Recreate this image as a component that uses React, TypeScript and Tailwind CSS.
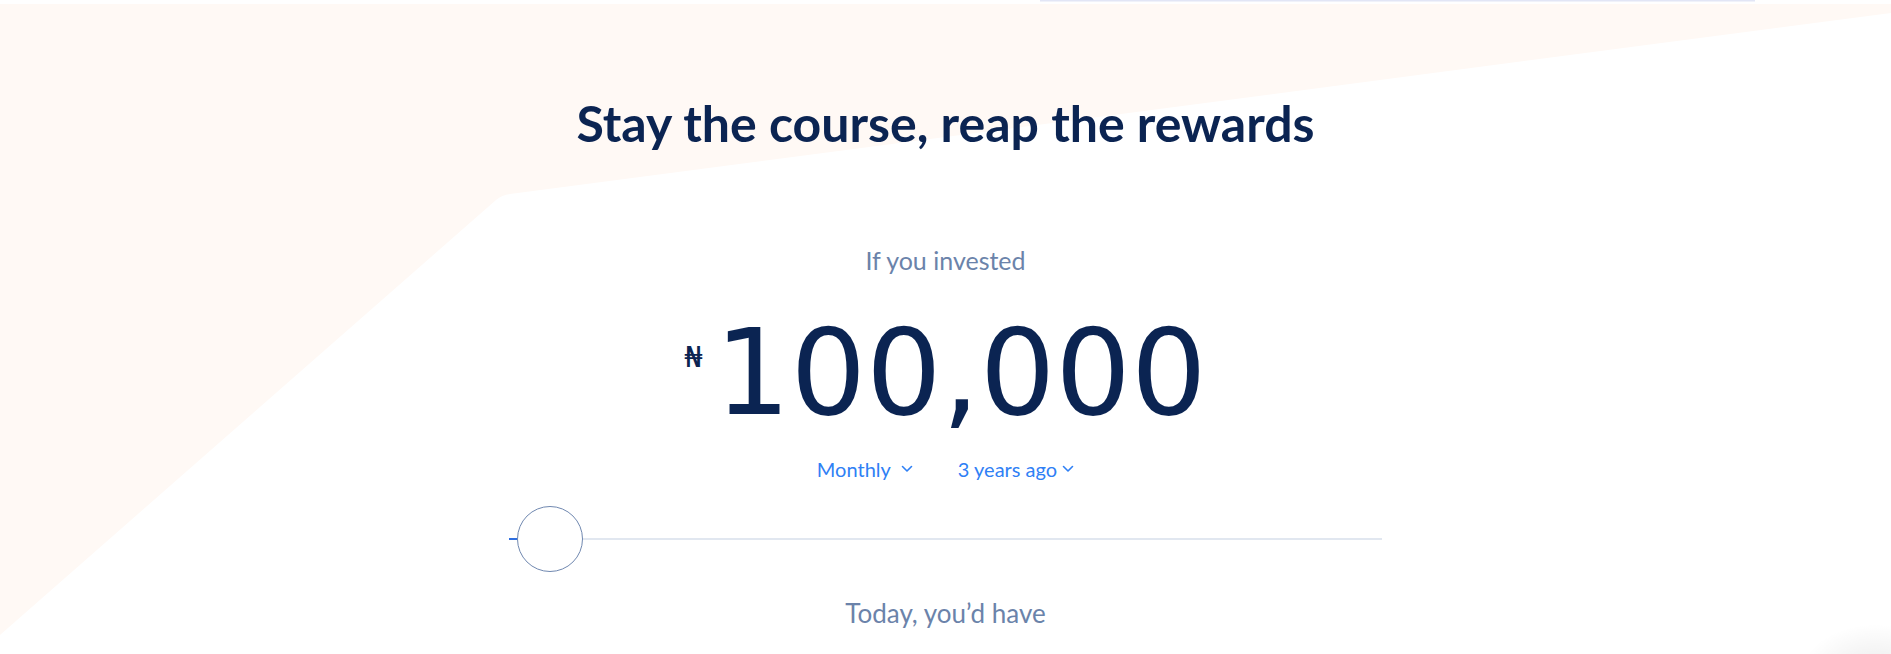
import React from "react";

const Chevron = () => (
  <svg width="12" height="8" viewBox="0 0 12 8" fill="none" className="shrink-0">
    <path d="M1.5 1.5l4.5 4.5 4.5-4.5" stroke="currentColor" strokeWidth="1.6" strokeLinecap="round" strokeLinejoin="round" />
  </svg>
);

const App = () => {
  return (
    <div className="relative w-full h-[654px] overflow-hidden bg-white font-['Lato','Liberation_Sans',sans-serif]">
      {/* backdrop shape */}
      <svg className="absolute inset-0 pointer-events-none" width="1891" height="654" viewBox="0 0 1891 654">
        <path d="M0 4H1891V13L510 194Q502 195 496 200L0 635Z" fill="#fff9f5" />
        <rect x="1040" y="0" width="715" height="1.5" fill="#e2e6f6" />
      </svg>
      <div className="absolute right-[-60px] bottom-[-70px] w-[150px] h-[100px] rounded-full bg-[radial-gradient(closest-side,rgba(0,0,0,0.08),rgba(0,0,0,0))]" />

      <div className="relative flex flex-col items-center pt-[94px]">
        <h2 className="text-[50px] leading-[58px] font-bold text-[#0b2452]">
          Stay the course, reap the rewards
        </h2>

        <p className="mt-[94px] text-[25px] leading-[28px] text-[#6b83aa]">If you invested</p>

        <div className="mt-[39px] flex items-start text-[#0b2452] font-['DejaVu_Sans',sans-serif]">
          <span className="text-[29px] leading-none mr-[12px] mt-[30px]">₦</span>
          <span className="text-[119px] leading-[120px]">100,000</span>
        </div>

        <div className="mt-[24px] flex items-center text-[20px] leading-[24px] text-[#2f80f5]">
          <button className="flex items-center gap-[10px]">
            Monthly
            <Chevron />
          </button>
          <button className="ml-[45px] flex items-center gap-[5px]">
            3 years ago
            <Chevron />
          </button>
        </div>

        <div className="mt-[25px] relative w-[873px] h-[66px] flex items-center">
          <div className="w-[8px] h-[2px] bg-[#2f6fe0]" />
          <div className="flex-1 h-[2px] bg-[#e1e7f0]" />
          <div className="absolute left-[8px] top-0 w-[66px] h-[66px] rounded-full bg-white border border-[#7088b0]" />
        </div>

        <p className="mt-[27px] text-[26px] leading-[28px] text-[#6b83aa]">Today, you’d have</p>
      </div>
    </div>
  );
};

export default App;
